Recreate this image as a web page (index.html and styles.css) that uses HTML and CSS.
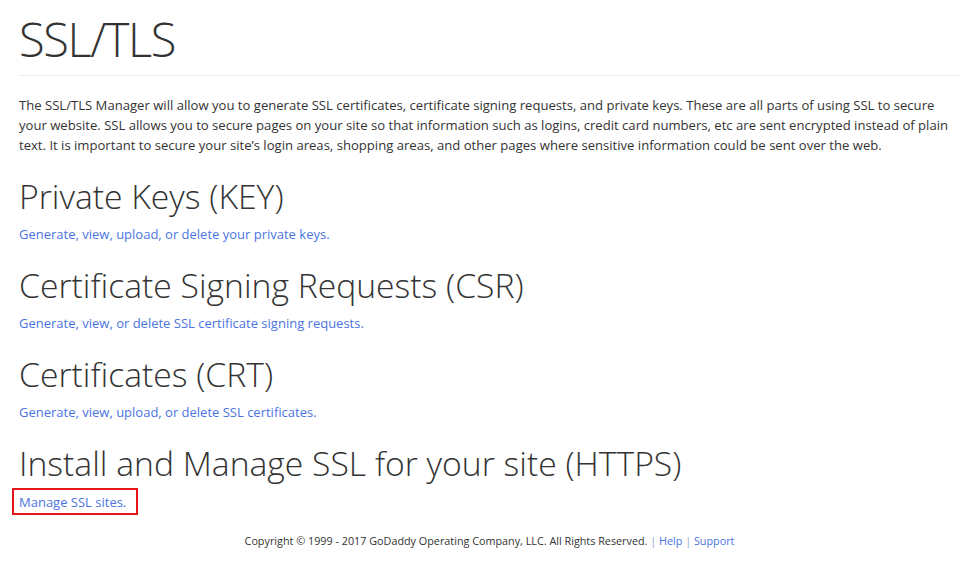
FILE: index.html
```html
<!DOCTYPE html>
<html lang="en">
<head>
<meta charset="utf-8">
<title>SSL/TLS</title>
<link rel="stylesheet" href="styles.css">
</head>
<body>
<main class="page">
  <h1 class="page-title">SSL/TLS</h1>
  <p class="intro">The SSL/TLS Manager will allow you to generate SSL certificates, certificate signing requests, and private keys. These are all parts of using SSL to secure your website. SSL allows you to secure pages on your site so that information such as logins, credit card numbers, etc are sent encrypted instead of plain text. It is important to secure your site’s login areas, shopping areas, and other pages where sensitive information could be sent over the web.</p>

  <section class="section">
    <h2 class="section-title">Private Keys (KEY)</h2>
    <a class="section-link" href="#">Generate, view, upload, or delete your private keys.</a>
  </section>

  <section class="section">
    <h2 class="section-title">Certificate Signing Requests (CSR)</h2>
    <a class="section-link" href="#">Generate, view, or delete SSL certificate signing requests.</a>
  </section>

  <section class="section">
    <h2 class="section-title">Certificates (CRT)</h2>
    <a class="section-link" href="#">Generate, view, upload, or delete SSL certificates.</a>
  </section>

  <section class="section">
    <h2 class="section-title">Install and Manage SSL for your site (HTTPS)</h2>
    <span class="highlight"><a class="section-link" href="#">Manage SSL sites.</a></span>
  </section>

  <footer class="footer">
    Copyright © 1999 - 2017 GoDaddy Operating Company, LLC. All Rights Reserved. <span class="sep">|</span> <a href="#">Help</a> <span class="sep">|</span> <a href="#">Support</a>
  </footer>
</main>
</body>
</html>
```

FILE: styles.css
```css
html, body {
  margin: 0;
  padding: 0;
  background: #ffffff;
}

body {
  font-family: "Open Sans", "Noto Sans", "Liberation Sans", sans-serif;
  color: #333333;
}

.page {
  width: 941px;
  margin-left: 19px;
}

.page-title {
  font-size: 47px;
  font-weight: 300;
  letter-spacing: -1.4px;
  line-height: 58px;
  margin: 10px 0 0;
  padding-bottom: 7px;
  border-bottom: 1px solid #eeeeee;
  color: #333333;
}

.intro {
  font-size: 13.1px;
  line-height: 20px;
  margin: 19px 0 0;
}

.section {
  display: flex;
  flex-direction: column;
  align-items: flex-start;
  margin-top: 21px;
}

.section-title {
  font-size: 33.7px;
  font-weight: 300;
  line-height: 40px;
  margin: 0 0 8px;
  color: #333333;
}

.section-link {
  font-size: 13px;
  line-height: 20px;
  color: #4a74e2;
  text-decoration: none;
}

.highlight {
  display: inline-block;
  border: 2px solid #e8141b;
  padding: 1px 10px 1px 5px;
  margin: -3px 0 -3px -7px;
  line-height: 20px;
}

.footer {
  margin-top: 20px;
  text-align: center;
  font-size: 10.8px;
  line-height: 17px;
  color: #333333;
}

.footer a {
  color: #4a74e2;
  text-decoration: none;
}

.footer .sep {
  color: #8fa3d6;
}
```
